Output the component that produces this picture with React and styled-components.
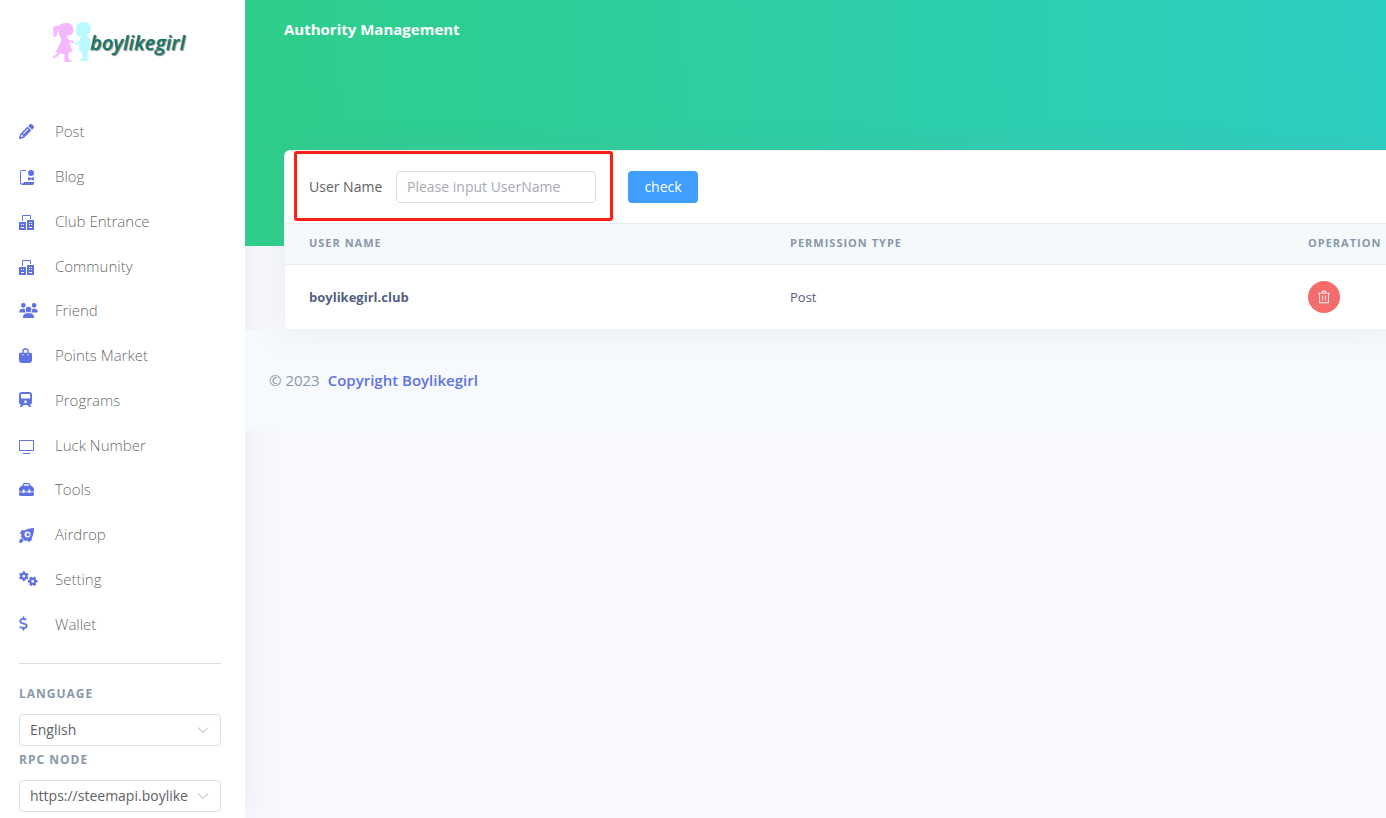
import { useState } from "react";
import styled, { createGlobalStyle } from "styled-components";
import {
  FaPencil,
  FaUsers,
  FaBagShopping,
  FaTrain,
  FaToolbox,
  FaGears,
  FaDollarSign,
} from "react-icons/fa6";

const menu = [
  { label: "Post", icon: FaPencil },
  { label: "Blog", icon: BlogIcon },
  { label: "Club Entrance", icon: BuildingIcon },
  { label: "Community", icon: BuildingIcon },
  { label: "Friend", icon: FaUsers, width: 19 },
  { label: "Points Market", icon: FaBagShopping, width: 13 },
  { label: "Programs", icon: FaTrain, width: 13 },
  { label: "Luck Number", icon: ScreenIcon },
  { label: "Tools", icon: FaToolbox },
  { label: "Airdrop", icon: RocketIcon },
  { label: "Setting", icon: FaGears, width: 19 },
  { label: "Wallet", icon: FaDollarSign, width: 9 },
];

const permissions = [{ user: "boylikegirl.club", type: "Post" }];

export default function App() {
  const [userName, setUserName] = useState("");

  return (
    <Page>
      <GlobalStyle />
      <Sidebar>
        <Brand href="#">
          <KidsLogo />
          <BrandName>boylikegirl</BrandName>
        </Brand>
        <Menu>
          {menu.map(({ label, icon: Icon, width }) => (
            <li key={label}>
              <MenuLink href="#">
                <IconBox $width={width}>
                  <Icon />
                </IconBox>
                {label}
              </MenuLink>
            </li>
          ))}
        </Menu>
        <Divider />
        <SideLabel htmlFor="language">Language</SideLabel>
        <SelectBox>
          <select id="language">
            <option>English</option>
          </select>
          <Chevron />
        </SelectBox>
        <SideLabel htmlFor="rpc">RPC Node</SideLabel>
        <SelectBox>
          <select id="rpc">
            <option>https://steemapi.boylikegirl.club</option>
          </select>
          <Chevron />
        </SelectBox>
      </Sidebar>

      <Main>
        <Header>
          <h1>Authority Management</h1>
        </Header>
        <Card>
          <SearchForm onSubmit={(e) => e.preventDefault()}>
            <Field>
              <label htmlFor="userName">User Name</label>
              <input
                id="userName"
                placeholder="Please input UserName"
                value={userName}
                onChange={(e) => setUserName(e.target.value)}
              />
              <Highlight />
            </Field>
            <CheckButton type="submit">check</CheckButton>
          </SearchForm>
          <Table>
            <colgroup>
              <col width="481" />
              <col />
              <col width="102" />
            </colgroup>
            <thead>
              <tr>
                <th>User Name</th>
                <th>Permission Type</th>
                <th>Operation</th>
              </tr>
            </thead>
            <tbody>
              {permissions.map((item) => (
                <tr key={item.user}>
                  <th scope="row">{item.user}</th>
                  <td>{item.type}</td>
                  <td>
                    <DeleteButton type="button" aria-label="Delete">
                      <TrashIcon />
                    </DeleteButton>
                  </td>
                </tr>
              ))}
            </tbody>
          </Table>
        </Card>
        <Footer>
          <span>© 2023</span>
          <a href="#">Copyright Boylikegirl</a>
        </Footer>
      </Main>
    </Page>
  );
}

function KidsLogo() {
  return (
    <svg width="40" height="40" viewBox="0 0 40 40" aria-hidden="true">
      <g fill="#f3b8ff">
        <path d="M7 4C9 1 12 1 15 1c4 0 6 3 6 6l1 2-1 1c0 2-1 3-4 3l-2 1 2 4 5 1v2l-5-.5 1 2 2.500 7-4 1.500v6l3 2v1h-7v-8l-5-.5-2 3-4 1.500-1-1.500 4-2 1-2-2-.5 6-11.500C8 13 6 11 6 7c-1 1 0 4-1 6-1 2-3 2-4 2 1-2 1-3 .5-5C.5 6 2 2.500 7 4z" />
      </g>
      <g fill="#b9faff">
        <path d="M25 3c3-3.500 10-4 12.500-.5C40 6 39 11 35 13.500c3 2 4 6 3.500 10.500l-.5 4-2 .5-.5 7.500.5 3h-8v-1.500l2.500-1.500-.5-6-3-1 .5-7-4 .5-1-2 5-1.500 1.500-5c-3 .5-4.500-.5-4.500-3l-1.500-1.500 1.500-2z" />
      </g>
    </svg>
  );
}

function BlogIcon() {
  return (
    <svg viewBox="0 0 15 18" fill="currentColor" aria-hidden="true">
      <path d="M7 3.500H2.500Q1.500 3.500 1.500 4.500V15" fill="none" stroke="currentColor" />
      <circle cx="12" cy="6" r="3" />
      <path d="M9 10l3 1 3-1v3.500l-3-1-3 1z" />
      <path d="M5 15H15v1q0 2-1.500 2H3.500q-2.500 0-2.500-2v-1.500q1 2 2.500 2Q5 16.500 5 15z" />
    </svg>
  );
}

function BuildingIcon() {
  return (
    <svg viewBox="0 0 15 18" fill="currentColor" aria-hidden="true">
      <path d="M3.500 9V3.500h8V7" fill="none" stroke="currentColor" />
      <path
        fillRule="evenodd"
        d="M0 10h7v8H0zM2 12v1h1v-1zM4 12v1h1v-1zM2 15v1h3v-1zM8 8h7v10H8zM10 10v1h1v-1zM12 10v1h1v-1zM10 12v1h1v-1zM12 12v1h1v-1zM10 15v1h3v-1z"
      />
    </svg>
  );
}

function ScreenIcon() {
  return (
    <svg viewBox="0 0 15 18" fill="none" stroke="currentColor" aria-hidden="true">
      <path d="M.5 4.500h14v10H.5zM4 17.500h7" />
    </svg>
  );
}

function RocketIcon() {
  return (
    <svg viewBox="0 0 15 18" fill="currentColor" aria-hidden="true">
      <path
        fillRule="evenodd"
        d="M15 3C11 3 8 4 5.500 5.500L2.500 5 1 8.500l1.500 1-.5 2.500L6 16l2.500-.5 1 1.500 3-1.500.5-3C14.500 10 15 7 15 3zM8.500 6.500a3 3 0 1 1 0 6 3 3 0 0 1 0-6z"
      />
      <circle cx="9" cy="9.500" r="1.500" />
      <path d="M2 13.500c1.500 0 2.500 1 2.500 2.500L3 17.500l-3 .5.5-3z" />
    </svg>
  );
}

function TrashIcon() {
  return (
    <svg width="14" height="14" viewBox="0 0 1024 1024" fill="currentColor" aria-hidden="true">
      <path d="M160 256H96a32 32 0 0 1 0-64h256V95.936a32 32 0 0 1 32-32h256a32 32 0 0 1 32 32V192h256a32 32 0 1 1 0 64h-64v672a32 32 0 0 1-32 32H192a32 32 0 0 1-32-32V256zm448-64v-64H416v64h192zM224 896h576V256H224v640zm192-128a32 32 0 0 1-32-32V416a32 32 0 0 1 64 0v320a32 32 0 0 1-32 32zm192 0a32 32 0 0 1-32-32V416a32 32 0 0 1 64 0v320a32 32 0 0 1-32 32z" />
    </svg>
  );
}

function Chevron() {
  return (
    <svg width="12" height="12" viewBox="0 0 12 12" fill="none" stroke="#a8abb2" aria-hidden="true">
      <path d="M1 3.500l5 5 5-5" />
    </svg>
  );
}

const GlobalStyle = createGlobalStyle`
  * {
    box-sizing: border-box;
  }
  body {
    margin: 0;
    background: #f8f9fe;
    font-family: "Open Sans", "Noto Sans", sans-serif;
    font-size: 14px;
    color: #525f7f;
  }
  input, select, button {
    font: inherit;
  }
  a {
    text-decoration: none;
  }
`;

const Page = styled.div`
  display: flex;
  min-height: 100vh;
  overflow: hidden;
`;

const Sidebar = styled.aside`
  width: 245px;
  flex-shrink: 0;
  padding: 22px 24px 6px 19px;
  background: white;
  box-shadow: 0 0 32px rgba(136, 152, 170, 0.15);
  display: flex;
  flex-direction: column;
`;

const Brand = styled.a`
  display: flex;
  align-items: center;
  height: 40px;
  margin: 0 0 47px 33px;
`;

const BrandName = styled.span`
  margin-left: -2px;
  padding-top: 2px;
  font-size: 20px;
  line-height: 24px;
  font-style: italic;
  font-weight: 600;
  color: #14796c;
  text-shadow: 1px 1px 1px rgba(0, 0, 0, 0.5);
`;

const Menu = styled.ul`
  list-style: none;
  margin: 0;
  padding: 0;
  height: 537px;
  display: grid;
  grid-auto-rows: 1fr;
`;

const MenuLink = styled.a`
  height: 100%;
  display: flex;
  align-items: center;
  color: rgba(0, 0, 0, 0.65);
  font-size: 15px;
  font-weight: 300;
`;

const IconBox = styled.span`
  width: 36px;
  display: flex;
  align-items: center;
  color: #5e72e4;
  svg {
    width: ${(p) => p.$width || 15}px;
    height: 15px;
  }
  svg[viewBox="0 0 15 18"] {
    height: 18px;
  }
`;

const Divider = styled.hr`
  width: 100%;
  margin: 17px 0 20px;
  border: 0;
  border-top: 1px solid #e0e0e0;
`;

const SideLabel = styled.label`
  font-size: 12px;
  line-height: 20px;
  margin-bottom: 10px;
  font-weight: 700;
  letter-spacing: 1px;
  text-transform: uppercase;
  color: #8898aa;
`;

const SelectBox = styled.div`
  display: flex;
  align-items: center;
  height: 32px;
  padding: 0 11px 0 10px;
  border: 1px solid #dcdfe6;
  border-radius: 4px;
  & + ${SideLabel} {
    margin-top: 4px;
  }
  select {
    appearance: none;
    flex: 1;
    min-width: 0;
    margin-right: 9px;
    padding: 0 0 1px;
    border: 0;
    background: none;
    color: #606266;
    outline: none;
  }
`;

const Main = styled.main`
  flex: 1;
  min-width: 0;
  position: relative;
`;

const Header = styled.header`
  height: 246px;
  padding: 17px 39px;
  background: linear-gradient(87deg, #2dce89, #2dcec2);
  h1 {
    margin: 0;
    font-size: 15px;
    line-height: 24px;
    font-weight: 700;
    color: white;
  }
`;

const Card = styled.section`
  position: relative;
  margin: -96px 0 0 39px;
  background: white;
  border: 1px solid rgba(0, 0, 0, 0.05);
  border-right: 0;
  border-radius: 6px 0 0 6px;
  box-shadow: 0 0 32px rgba(136, 152, 170, 0.15);
`;

const SearchForm = styled.form`
  display: flex;
  gap: 32px;
  padding: 20px 24px;
`;

const Field = styled.div`
  position: relative;
  display: flex;
  align-items: center;
  label {
    width: 87px;
    padding-bottom: 1px;
    color: #606266;
  }
  input {
    width: 200px;
    height: 32px;
    padding: 0 10px 1px;
    border: 1px solid #dcdfe6;
    border-radius: 4px;
    color: #606266;
    outline: none;
  }
  input::placeholder {
    color: #a8abb2;
  }
`;

const Highlight = styled.div`
  position: absolute;
  inset: -20px -17px -18px -15px;
  border: 3px solid #fb2017;
  border-radius: 3px;
  pointer-events: none;
`;

const CheckButton = styled.button`
  width: 70px;
  height: 32px;
  padding: 0 0 2px;
  border: 0;
  border-radius: 4px;
  background: #409eff;
  color: white;
  cursor: pointer;
`;

const Table = styled.table`
  width: 100%;
  table-layout: fixed;
  border-collapse: collapse;
  th,
  td {
    padding: 0 0 0 24px;
    text-align: left;
    font-size: 13px;
  }
  thead th {
    height: 41px;
    padding-bottom: 3px;
    background: #f6f9fc;
    border-top: 1px solid #e9ecef;
    border-bottom: 1px solid #e9ecef;
    font-size: 11px;
    letter-spacing: 1px;
    text-transform: uppercase;
    color: #8898aa;
  }
  tbody tr {
    height: 64px;
  }
`;

const DeleteButton = styled.button`
  width: 32px;
  height: 32px;
  padding: 0;
  border: 0;
  border-radius: 50%;
  background: #f56c6c;
  color: white;
  display: flex;
  align-items: center;
  justify-content: center;
  cursor: pointer;
`;

const Footer = styled.footer`
  display: flex;
  gap: 8px;
  padding: 40px 24px;
  background: #f7fafc;
  font-size: 15px;
  line-height: 21px;
  color: #8898aa;
  a {
    font-weight: 600;
    color: #5e72e4;
  }
`;
